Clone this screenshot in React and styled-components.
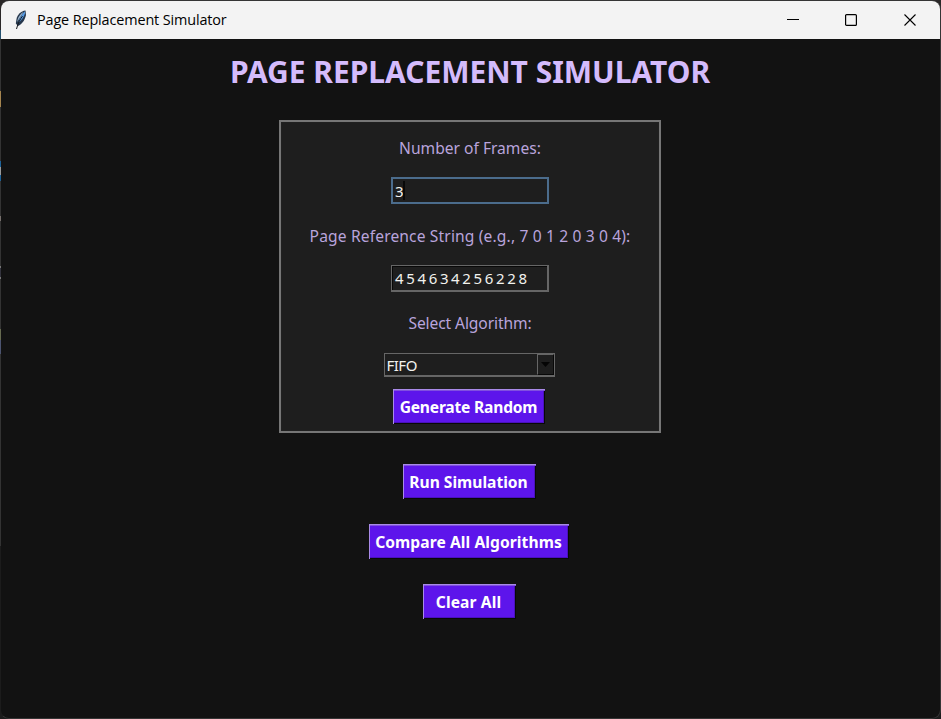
import React from "react";
import styled, { createGlobalStyle } from "styled-components";

const GlobalStyle = createGlobalStyle`
  * { box-sizing: border-box; }
  body { margin: 0; background: #1c1c1c; overflow: hidden; }
`;

const Desktop = styled.div`
  width: 941px;
  height: 719px;
  background: linear-gradient(
    #2a2828 0 30px, #23506e 30px 39px, #333 39px 91px, #a5854f 91px 107px,
    #333 107px 161px, #1d6299 161px 167px, #9a9a9a 167px 175px, #1d6299 175px 181px,
    #333 181px 216px, #77706c 216px 221px, #333 221px 266px, #777 266px 268px,
    #33333d 268px 277px, #777 277px 279px, #333 279px 329px, #666a50 329px 340px,
    #4c5470 340px 354px, #333 354px 546px, #1c1c1c 546px
  );
`;

const Window = styled.div`
  width: 941px;
  height: 719px;
  display: flex;
  flex-direction: column;
  border: 1px solid #353535;
  border-left-color: transparent;
  border-radius: 9px;
  background: #121212;
  background-clip: padding-box;
  overflow: hidden;
  font-family: "Noto Sans", "Open Sans", sans-serif;
`;

const TitleBar = styled.header`
  height: 38px;
  flex: none;
  display: flex;
  align-items: center;
  padding: 0 1px 0 12px;
  background: #f3f3f3;
  color: #000;
`;

const Caption = styled.span`
  flex: 1;
  margin-left: 8px;
  font: 14.4px/20px "Open Sans", sans-serif;
  letter-spacing: ${(p) => p.$track}px;
  white-space: pre;
`;

const WindowButton = styled.button`
  width: 58.5px;
  height: 38px;
  padding: 0;
  border: 0;
  background: none;
  display: grid;
  place-items: center;
`;

const Content = styled.main`
  display: flex;
  flex-direction: column;
  align-items: center;
  padding-right: 1px;
`;

const Heading = styled.h1`
  margin: 12px 0 0;
  height: 69px;
  font: 700 30px/42px "Noto Sans", sans-serif;
  letter-spacing: ${(p) => p.$track}px;
  color: #d4bbfc;
  white-space: pre;
`;

const Panel = styled.section`
  width: 382px;
  height: 313px;
  display: flex;
  flex-direction: column;
  align-items: center;
  padding-top: 14px;
  background: #1e1e1e;
  border: 2px solid #767676;
  outline: 1px solid #202020;
  outline-offset: -3px;
`;

const Label = styled.label`
  height: 24px;
  margin-bottom: ${(p) => p.$gap}px;
  font-size: 15.6px;
  line-height: 24px;
  letter-spacing: ${(p) => p.$track}px;
  color: #b9a4dc;
  white-space: pre;
`;

const Entry = styled.div`
  width: 158px;
  height: 27px;
  margin-bottom: ${(p) => p.$gap}px;
  display: flex;
  align-items: center;
  padding-left: ${(p) => (p.$focused ? 2 : 1)}px;
  background: #1e1e1e;
  border: 2px solid ${(p) => (p.$focused ? "#4b6c8c" : "#666")};
  ${(p) => !p.$focused && `
    border-width: 1px 2px 2px 1px;
    box-shadow: inset 1px 1px #080808;
    padding-left: 3px;
  `}
`;

const Value = styled.span`
  font-size: 15px;
  line-height: 22px;
  letter-spacing: ${(p) => p.$track}px;
  color: #f2f2ee;
  white-space: pre;
`;

const Caret = styled.span`
  width: 2px;
  height: 19px;
  background: #080808;
`;

const Combo = styled.div`
  width: 171px;
  height: 24px;
  margin: 0 2px 12px 0;
  display: flex;
  align-items: center;
  justify-content: space-between;
  padding-left: 2px;
  border: 1px solid #666;
  border-bottom-width: 2px;
`;

const ComboArrow = styled.span`
  width: 17px;
  height: 21px;
  display: grid;
  place-items: center;
  background: #1e1e1e;
  border: 1px solid #666;
  border-right-color: #080808;
  border-bottom-color: #080808;
`;

const Button = styled.button`
  width: ${(p) => p.$width}px;
  height: 35px;
  flex: none;
  padding: 1px 1px 0 0;
  margin: ${(p) => p.$top || 0}px 2px 0 0;
  display: flex;
  align-items: center;
  justify-content: center;
  background: #5d15eb;
  border: 0;
  box-shadow: inset 1px 1px #a98ae8, inset 0 2px #8150df, inset -1px -1px #080808, inset -2px -2px #4a10bd;
  color: #fff;
  font: 700 15.6px/24px "Noto Sans", sans-serif;
  letter-spacing: ${(p) => p.$track}px;
  white-space: pre;
`;

const Feather = () => (
  <svg width="16" height="20" viewBox="0 0 16 20">
    <path d="M12.5.5C8 1 4.500 4.500 3.500 9l-.7 4.500L5 16c4-2 7-6 8-11z" fill="#26384d" />
    <path d="M12 1.200C9 4 6.500 8 5.500 12.500c2.500-1.500 5-5 6.500-9z" fill="#569be5" />
    <path d="M10.500 2C7 4 4.500 8 4.200 12L8 6z" fill="#9bb4cc" />
    <path d="M9.500 6C7 9.500 5 13 3.500 19" fill="none" stroke="#16191d" strokeWidth="1" />
  </svg>
);

export default function App() {
  return (
    <Desktop>
      <GlobalStyle />
      <Window>
        <TitleBar>
          <Feather />
          <Caption $track={-0.12}>Page Replacement Simulator</Caption>
          <WindowButton aria-label="Minimize">
            <svg width="12" height="12"><path d="M0 5.500h12" stroke="#000" /></svg>
          </WindowButton>
          <WindowButton aria-label="Maximize">
            <svg width="12" height="12"><rect x=".6" y=".6" width="10.800" height="10.800" rx="1" fill="none" stroke="#000" strokeWidth="1.200" /></svg>
          </WindowButton>
          <WindowButton aria-label="Close">
            <svg width="12" height="12"><path d="M.5.5l11 11M11.500.5l-11 11" stroke="#000" strokeWidth="1.100" /></svg>
          </WindowButton>
        </TitleBar>
        <Content>
          <Heading $track={-0.03}>PAGE REPLACEMENT SIMULATOR</Heading>
          <Panel>
            <Label $gap={17} $track={0}>Number of Frames:</Label>
            <Entry $focused $gap={20}><Value $track={-0.8}>3</Value><Caret /></Entry>
            <Label $gap={17} $track={0.14}>Page Reference String (e.g., 7 0 1 2 0 3 0 4):</Label>
            <Entry $gap={19}><Value $track={-0.63}>4 5 4 6 3 4 2 5 6 2 2 8</Value></Entry>
            <Label $gap={18} $track={-0.1}>Select Algorithm:</Label>
            <Combo>
              <Value $track={-0.5}>FIFO</Value>
              <ComboArrow><svg width="9" height="5"><path d="M0 0h9L4.500 5z" fill="#050505" /></svg></ComboArrow>
            </Combo>
            <Button $width={152} $track={-0.2}>Generate Random</Button>
          </Panel>
          <Button $width={133} $top={31} $track={0}>Run Simulation</Button>
          <Button $width={200} $top={25} $track={0.08}>Compare All Algorithms</Button>
          <Button $width={93} $top={25} $track={0.1}>Clear All</Button>
        </Content>
      </Window>
    </Desktop>
  );
}
